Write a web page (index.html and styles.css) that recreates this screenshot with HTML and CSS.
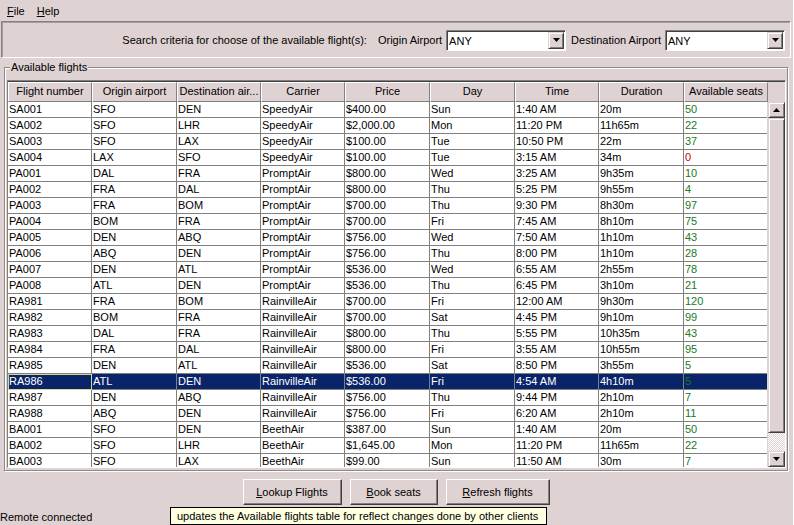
FILE: index.html
```html
<!DOCTYPE html>
<html>
<head>
<meta charset="utf-8">
<link rel="stylesheet" href="styles.css">
</head>
<body>
<div class="window">
  <div class="menubar">
    <span class="menu"><u>F</u>ile</span>
    <span class="menu"><u>H</u>elp</span>
  </div>
  <div class="search">
    <span class="lbl">Search criteria for choose of the available flight(s):</span>
    <span class="lbl">Origin Airport</span>
    <div class="combo"><span class="combo-val">ANY</span><span class="combo-btn"><svg width="7" height="4" viewBox="0 0 7 4"><polygon points="0,0 7,0 3.5,4" fill="#000"/></svg></span></div>
    <span class="lbl">Destination Airport</span>
    <div class="combo"><span class="combo-val">ANY</span><span class="combo-btn"><svg width="7" height="4" viewBox="0 0 7 4"><polygon points="0,0 7,0 3.5,4" fill="#000"/></svg></span></div>
  </div>
  <div class="group">
    <span class="group-title">Available flights</span>
    <div class="pane">
      <div class="header">
        <div class="hcell">Flight number</div>
        <div class="hcell">Origin airport</div>
        <div class="hcell">Destination air...</div>
        <div class="hcell">Carrier</div>
        <div class="hcell">Price</div>
        <div class="hcell">Day</div>
        <div class="hcell">Time</div>
        <div class="hcell">Duration</div>
        <div class="hcell">Available seats</div>
      </div>
      <div class="body">
        <div class="viewport">
          <div class="row"><div>SA001</div><div>SFO</div><div>DEN</div><div>SpeedyAir</div><div>$400.00</div><div>Sun</div><div>1:40 AM</div><div>20m</div><div class="ok">50</div></div>
          <div class="row"><div>SA002</div><div>SFO</div><div>LHR</div><div>SpeedyAir</div><div>$2,000.00</div><div>Mon</div><div>11:20 PM</div><div>11h65m</div><div class="ok">22</div></div>
          <div class="row"><div>SA003</div><div>SFO</div><div>LAX</div><div>SpeedyAir</div><div>$100.00</div><div>Tue</div><div>10:50 PM</div><div>22m</div><div class="ok">37</div></div>
          <div class="row"><div>SA004</div><div>LAX</div><div>SFO</div><div>SpeedyAir</div><div>$100.00</div><div>Tue</div><div>3:15 AM</div><div>34m</div><div class="none">0</div></div>
          <div class="row"><div>PA001</div><div>DAL</div><div>FRA</div><div>PromptAir</div><div>$800.00</div><div>Wed</div><div>3:25 AM</div><div>9h35m</div><div class="ok">10</div></div>
          <div class="row"><div>PA002</div><div>FRA</div><div>DAL</div><div>PromptAir</div><div>$800.00</div><div>Thu</div><div>5:25 PM</div><div>9h55m</div><div class="ok">4</div></div>
          <div class="row"><div>PA003</div><div>FRA</div><div>BOM</div><div>PromptAir</div><div>$700.00</div><div>Thu</div><div>9:30 PM</div><div>8h30m</div><div class="ok">97</div></div>
          <div class="row"><div>PA004</div><div>BOM</div><div>FRA</div><div>PromptAir</div><div>$700.00</div><div>Fri</div><div>7:45 AM</div><div>8h10m</div><div class="ok">75</div></div>
          <div class="row"><div>PA005</div><div>DEN</div><div>ABQ</div><div>PromptAir</div><div>$756.00</div><div>Wed</div><div>7:50 AM</div><div>1h10m</div><div class="ok">43</div></div>
          <div class="row"><div>PA006</div><div>ABQ</div><div>DEN</div><div>PromptAir</div><div>$756.00</div><div>Thu</div><div>8:00 PM</div><div>1h10m</div><div class="ok">28</div></div>
          <div class="row"><div>PA007</div><div>DEN</div><div>ATL</div><div>PromptAir</div><div>$536.00</div><div>Wed</div><div>6:55 AM</div><div>2h55m</div><div class="ok">78</div></div>
          <div class="row"><div>PA008</div><div>ATL</div><div>DEN</div><div>PromptAir</div><div>$536.00</div><div>Thu</div><div>6:45 PM</div><div>3h10m</div><div class="ok">21</div></div>
          <div class="row"><div>RA981</div><div>FRA</div><div>BOM</div><div>RainvilleAir</div><div>$700.00</div><div>Fri</div><div>12:00 AM</div><div>9h30m</div><div class="ok">120</div></div>
          <div class="row"><div>RA982</div><div>BOM</div><div>FRA</div><div>RainvilleAir</div><div>$700.00</div><div>Sat</div><div>4:45 PM</div><div>9h10m</div><div class="ok">99</div></div>
          <div class="row"><div>RA983</div><div>DAL</div><div>FRA</div><div>RainvilleAir</div><div>$800.00</div><div>Thu</div><div>5:55 PM</div><div>10h35m</div><div class="ok">43</div></div>
          <div class="row"><div>RA984</div><div>FRA</div><div>DAL</div><div>RainvilleAir</div><div>$800.00</div><div>Fri</div><div>3:55 AM</div><div>10h55m</div><div class="ok">95</div></div>
          <div class="row"><div>RA985</div><div>DEN</div><div>ATL</div><div>RainvilleAir</div><div>$536.00</div><div>Sat</div><div>8:50 PM</div><div>3h55m</div><div class="ok">5</div></div>
          <div class="row selected"><div class="focus">RA986</div><div>ATL</div><div>DEN</div><div>RainvilleAir</div><div>$536.00</div><div>Fri</div><div>4:54 AM</div><div>4h10m</div><div class="ok">5</div></div>
          <div class="row"><div>RA987</div><div>DEN</div><div>ABQ</div><div>RainvilleAir</div><div>$756.00</div><div>Thu</div><div>9:44 PM</div><div>2h10m</div><div class="ok">7</div></div>
          <div class="row"><div>RA988</div><div>ABQ</div><div>DEN</div><div>RainvilleAir</div><div>$756.00</div><div>Fri</div><div>6:20 AM</div><div>2h10m</div><div class="ok">11</div></div>
          <div class="row"><div>BA001</div><div>SFO</div><div>DEN</div><div>BeethAir</div><div>$387.00</div><div>Sun</div><div>1:40 AM</div><div>20m</div><div class="ok">50</div></div>
          <div class="row"><div>BA002</div><div>SFO</div><div>LHR</div><div>BeethAir</div><div>$1,645.00</div><div>Mon</div><div>11:20 PM</div><div>11h65m</div><div class="ok">22</div></div>
          <div class="row"><div>BA003</div><div>SFO</div><div>LAX</div><div>BeethAir</div><div>$99.00</div><div>Sun</div><div>11:50 AM</div><div>30m</div><div class="ok">7</div></div>
        </div>
        <div class="vscroll">
          <div class="sbtn"><svg width="7" height="4" viewBox="0 0 7 4"><polygon points="3.5,0 7,4 0,4" fill="#000"/></svg></div>
          <div class="thumb"></div>
          <div class="track"></div>
          <div class="sbtn"><svg width="7" height="4" viewBox="0 0 7 4"><polygon points="0,0 7,0 3.5,4" fill="#000"/></svg></div>
        </div>
      </div>
    </div>
  </div>
  <div class="buttons">
    <button class="btn btn-lookup"><u>L</u>ookup Flights</button>
    <button class="btn btn-book"><u>B</u>ook seats</button>
    <button class="btn btn-refresh"><u>R</u>efresh flights</button>
  </div>
  <div class="status">Remote connected</div>
  <div class="tooltip">updates the Available flights table for reflect changes done by other clients</div>
</div>
</body>
</html>
```
FILE: styles.css
```css
* { box-sizing: border-box; }
html, body { margin: 0; padding: 0; }
body {
  background: #dfd2d2;
  font-family: "Liberation Sans", Arial, sans-serif;
  font-size: 11px;
  color: #000;
}
.window {
  position: relative;
  width: 794px;
  height: 525px;
  overflow: hidden;
  display: flex;
  flex-direction: column;
  border-right: 1px solid #fff;
}
.menubar {
  height: 21px;
  display: flex;
  align-items: center;
  padding-left: 1px;
  padding-top: 1px;
}
.menu { padding: 0 6px; font-size: 11px; }
.menu u { text-decoration-thickness: 1px; text-underline-offset: 1px; }

.search {
  margin: 0 2px 0 1px;
  height: 37px;
  border: 1px solid;
  border-color: #808080 #fff #fff #808080;
  box-shadow: inset 1px 1px 0 #a8a0a0;
  display: flex;
  align-items: center;
  justify-content: flex-end;
  padding: 1px 5px 0 0;
}
.lbl { margin-right: 4px; white-space: nowrap; }
.lbl + .lbl { margin-left: 7px; }
.combo + .lbl { margin-left: 5px; }
.combo {
  width: 120px;
  height: 21px;
  display: flex;
  border: 1px solid;
  border-color: #808080 #fff #fff #808080;
  background: #fff;
  box-shadow: inset 1px 1px 0 #404040;
}
.combo-val {
  flex: 1;
  padding: 2px 0 0 2px;
  line-height: 16px;
}
.combo-btn {
  width: 16px;
  margin: 1px 1px 1px 0;
  background: #dfd2d2;
  border: 1px solid;
  border-color: #dfd2d2 #404040 #404040 #dfd2d2;
  box-shadow: inset 1px 1px 0 #fff, inset -1px -1px 0 #808080;
  display: flex;
  align-items: center;
  justify-content: center;
}

.group {
  position: relative;
  margin: 9px 5px 0 4px;
  height: 404px;
  border: 1px solid #8a8a8a;
  box-shadow: inset 1px 1px 0 #fff, 1px 1px 0 #fff;
  padding: 12px 0 0 2px;
}
.group-title {
  position: absolute;
  top: -8px;
  left: 5px;
  padding: 0 1px;
  background: #dfd2d2;
  line-height: 14px;
}
.pane {
  width: 779px;
  border: 1px solid;
  border-color: #808080 #fff #fff #808080;
  box-shadow: inset 0 1px 0 #404040;
  padding: 1px 0 0 0;
  background: #dfd2d2;
}
.header {
  display: grid;
  grid-template-columns: 84px 85px 84px 84px 85px 85px 84px 85px 84px;
  height: 20px;
}
.hcell {
  border: 1px solid;
  border-color: #fff #808080 #808080 #fff;
  text-align: center;
  line-height: 17px;
  white-space: nowrap;
  overflow: hidden;
}
.body {
  display: flex;
  height: 365px;
}
.viewport {
  width: 760px;
  height: 365px;
  overflow: hidden;
  background: #fff;
}
.row {
  display: grid;
  grid-template-columns: 84px 85px 84px 84px 85px 85px 84px 85px 84px;
  height: 16px;
}
.row > div {
  border-right: 1px solid #808080;
  border-bottom: 1px solid #808080;
  padding-left: 1px;
  line-height: 15px;
  white-space: nowrap;
  overflow: hidden;
}
.row > .ok { color: #1b7a1b; }
.row > .none { color: #c00000; }
.row.selected { background: #0a246a; color: #fff; }
.row.selected > .focus { border: 1px solid #d8d890; padding-left: 0; line-height: 13px; }
.vscroll {
  width: 18px;
  padding-left: 1px;
  display: flex;
  flex-direction: column;
}
.sbtn, .thumb {
  background: #dfd2d2;
  border: 1px solid;
  border-color: #dfd2d2 #404040 #404040 #dfd2d2;
  box-shadow: inset 1px 1px 0 #fff, inset -1px -1px 0 #808080;
}
.sbtn {
  height: 16px;
  display: flex;
  align-items: center;
  justify-content: center;
}
.thumb { height: 315px; }
.track {
  flex: 1;
  background: repeating-conic-gradient(#fff 0 25%, #dfd2d2 0 50%) 0 0 / 2px 2px;
}

.buttons {
  display: flex;
  justify-content: center;
  gap: 8px;
  margin-top: 8px;
  padding-right: 1px;
}
.btn {
  height: 26px;
  font-family: "Liberation Sans", Arial, sans-serif;
  font-size: 11px;
  color: #000;
  background: #dfd2d2;
  border: 1px solid;
  border-color: #fff #404040 #404040 #fff;
  box-shadow: inset -1px -1px 0 #808080;
  padding: 0;
}
.btn-lookup { width: 99px; }
.btn-book { width: 88px; }
.btn-refresh { width: 104px; }
.status {
  flex: 1;
  display: flex;
  align-items: flex-end;
  padding-bottom: 1px;
  line-height: 14px;
}
.tooltip {
  position: absolute;
  left: 170px;
  top: 507px;
  width: 377px;
  height: 18px;
  background: #ffffe1;
  border: 1px solid #000;
  padding: 0 0 0 6px;
  line-height: 16px;
  white-space: nowrap;
}
```
